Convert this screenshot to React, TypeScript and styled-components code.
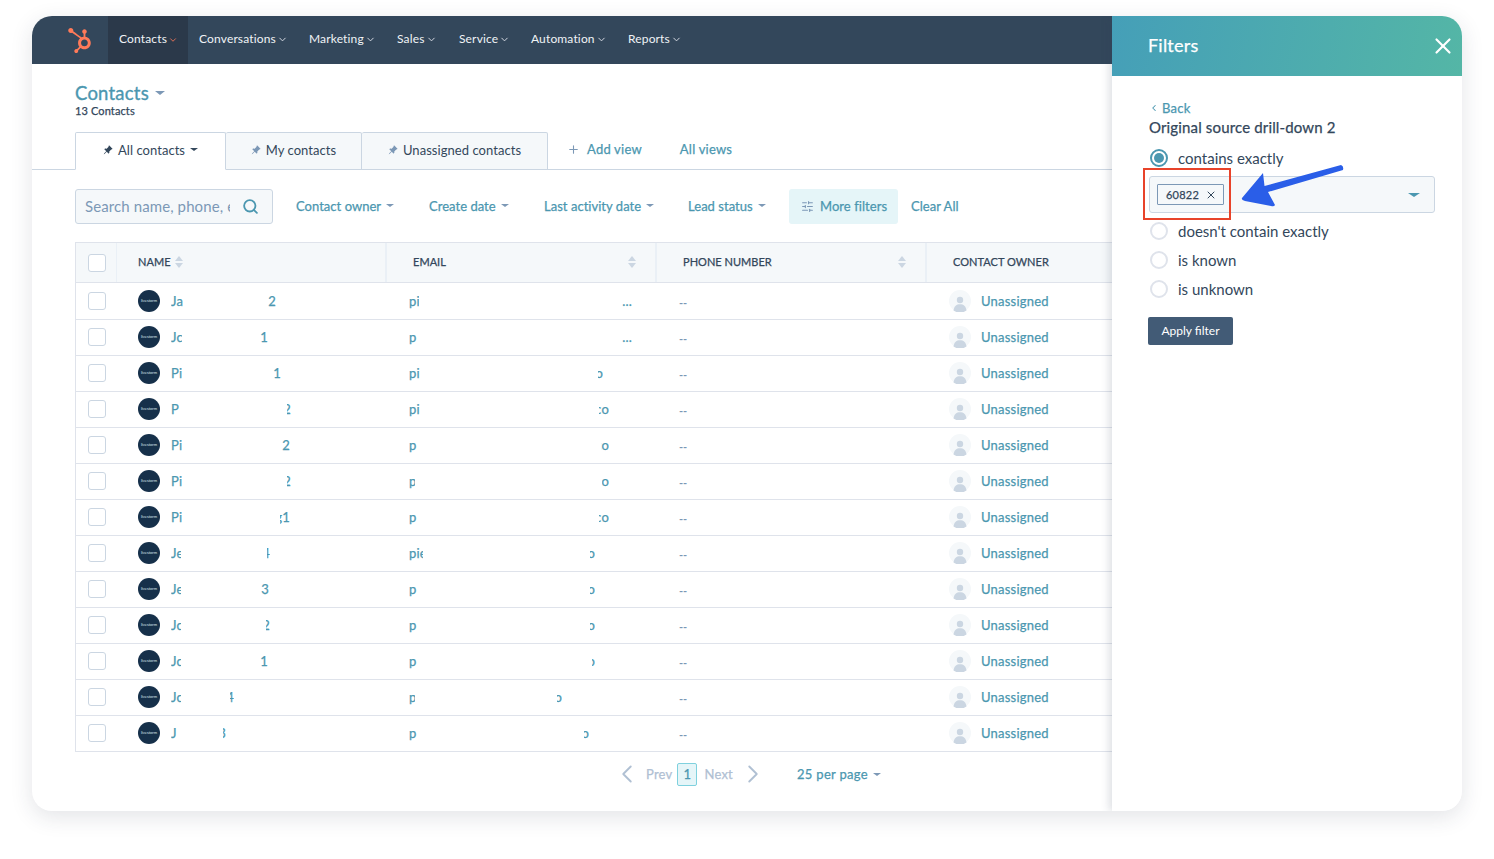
import React from 'react';
import styled, { createGlobalStyle, css } from 'styled-components';
import { ChevronDown, ChevronLeft, ChevronRight, Plus, Search, SlidersHorizontal, X } from 'lucide-react';
import { FaHubspot } from 'react-icons/fa';
import { BsPinAngleFill } from 'react-icons/bs';

const teal = '#4b97b0';
const ink = '#33475b';
const line = '#dfe3eb';

const medium = css`
  font-weight: 400; -webkit-text-stroke: .25px currentColor; letter-spacing: .22px;
`;

const Global = createGlobalStyle`
  html, body { margin: 0; padding: 0; background: #fff; }
  body { font-family: Lato, "Open Sans", sans-serif; color: ${ink}; }
  * { box-sizing: border-box; }
`;
const Page = styled.div`
  width: 1494px; height: 859px; padding: 16px 32px 48px; overflow: hidden;
`;
const Card = styled.div`
  display: flex; width: 1430px; height: 795px; border-radius: 20px; background: #fff; overflow: hidden;
  box-shadow: 0 6px 22px rgba(40, 50, 70, .13);
`;
const Main = styled.main`
  display: flex; flex-direction: column; width: 1080px; flex: none; overflow: hidden;
`;
const Nav = styled.nav`
  display: flex; align-items: stretch; height: 48px; flex: none; background: #33475b;
`;
const LogoBox = styled.div`
  display: flex; align-items: center; justify-content: center; width: 76px; color: #ff7a59; padding-left: 19px; flex: none;
`;
const NavItem = styled.div<{ $active?: boolean; $w: number }>`
  display: flex; align-items: center; gap: 1px; width: ${p => p.$w}px; padding: 0 0 3px 11px; flex: none;
  color: #f0f3f6; font-size: 12px; letter-spacing: .15px;
  background: ${p => (p.$active ? '#2b394a' : 'transparent')};
  svg { color: ${p => (p.$active ? '#ff7a59' : '#dfe3eb')}; margin-top: 2px; }
`;
const Heading = styled.header`
  padding: 18px 0 0 43px; height: 68px; flex: none;
`;
const TitleRow = styled.div`
  ${medium}; display: flex; align-items: center; gap: 6px; height: 22px; color: ${teal}; font-size: 18.5px;
  -webkit-text-stroke: .35px currentColor;
`;
const Caret = styled.span<{ $s?: number; $c?: string }>`
  display: inline-block; width: 0; height: 0; flex: none;
  border-left: ${p => p.$s ?? 4}px solid transparent; border-right: ${p => p.$s ?? 4}px solid transparent;
  border-top: ${p => Math.ceil((p.$s ?? 4) * 0.62)}px solid ${p => p.$c ?? '#7c98b6'};
`;
const Count = styled.div`
  ${medium}; font-size: 11px; margin-top: 0; line-height: 14px; letter-spacing: .12px;
`;
const Tabs = styled.div`
  display: flex; align-items: stretch; height: 38px; flex: none; padding-left: 43px; border-bottom: 1px solid #cbd6e2;
`;
const Tab = styled.div<{ $active?: boolean; $w: number }>`
  display: flex; align-items: center; justify-content: center; gap: 5px; width: ${p => p.$w}px; height: 38px; flex: none;
  padding-bottom: 3px; font-size: 13px; letter-spacing: .05px; color: ${ink}; background: ${p => (p.$active ? '#fff' : '#f5f8fa')};
  border: 1px solid #cbd6e2; border-left-width: ${p => (p.$active ? 1 : 0)}px;
  border-bottom-color: ${p => (p.$active ? '#fff' : '#cbd6e2')};
  border-radius: 2px 2px 0 0;
  svg { color: ${p => (p.$active ? ink : '#7c98b6')}; }
`;
const TabLink = styled.div<{ $ml: number }>`
  ${medium}; display: flex; align-items: center; gap: 7px; margin-left: ${p => p.$ml}px; height: 34px; color: ${teal};
  font-size: 13px; svg { color: #7c98b6; }
`;
const Filters = styled.div`
  display: flex; align-items: center; height: 35px; margin: 19px 0 18px 43px;
`;
const SearchBox = styled.div`
  display: flex; align-items: center; justify-content: space-between; width: 198px; height: 35px; padding: 0 13px 2px 9px;
  flex: none; background: #f5f8fa; border: 1px solid #cbd6e2; border-radius: 3px; color: #7c98b6; font-size: 15px; letter-spacing: .1px;
  svg { color: ${teal}; flex: none; margin-top: 2px; }
`;
const SearchHint = styled.span`
  width: 145px; overflow: hidden; white-space: nowrap;
`;
const FilterItem = styled.div<{ $w: number }>`
  ${medium}; letter-spacing: .03px; display: flex; align-items: center; gap: 5px; width: ${p => p.$w}px; padding-bottom: 2px; color: ${teal}; font-size: 13px; flex: none; white-space: nowrap;
`;
const MoreFilters = styled.div`
  ${medium}; letter-spacing: .05px; display: flex; align-items: center; gap: 6px; width: 109px; height: 35px; padding: 0 0 2px 12px; flex: none;
  background: #e5f5f8; border-radius: 3px; color: ${teal}; font-size: 13px; white-space: nowrap;
  svg { color: #7c98b6; margin-top: 2px; }
`;
const Table = styled.div`
  margin-left: 43px; border-left: 1px solid ${line}; border-top: 1px solid ${line};
`;
const Row = styled.div<{ $head?: boolean; $first?: boolean }>`
  display: grid; grid-template-columns: 41px 270px 270px 270px 1fr; align-items: center;
  height: ${p => (p.$head ? 40 : p.$first ? 37 : 36)}px; padding-bottom: ${p => (p.$head || p.$first ? 0 : 1)}px;
  background: ${p => (p.$head ? '#f5f8fa' : '#fff')}; border-bottom: 1px solid ${line};
`;
const HeadCell = styled.div<{ $pad: number; $sortRight?: boolean; $last?: boolean }>`
  ${medium}; letter-spacing: .03px; display: flex; align-items: center; height: 100%; padding: 0 19px 2px ${p => p.$pad}px;
  justify-content: ${p => (p.$sortRight ? 'space-between' : 'flex-start')}; gap: 4px;
  border-right: ${p => (p.$last ? 0 : 2)}px solid #eaf0f6; font-size: 11px; color: ${ink}; white-space: nowrap;
`;
const CheckCell = styled.div<{ $head?: boolean }>`
  display: flex; align-items: center; justify-content: center; height: 100%; padding-left: ${p => (p.$head ? 1 : 0)}px;
  border-right: ${p => (p.$head ? 1 : 0)}px solid #eaf0f6;
`;
const Check = styled.span`
  display: block; width: 18px; height: 18px; background: #fff; border: 1px solid #cbd6e2; border-radius: 3px;
`;
const Sort = styled.span`
  display: flex; flex-direction: column; gap: 2px; flex: none;
`;
const SortUp = styled.span`
  width: 0; height: 0; border-left: 4px solid transparent; border-right: 4px solid transparent; border-bottom: 5px solid #cbd6e2;
`;
const SortDown = styled(SortUp)`
  border-bottom: 0; border-top: 5px solid #cbd6e2;
`;
const NameCell = styled.div`
  display: flex; align-items: center; padding-left: 21px; height: 100%;
`;
const Logo = styled.span`
  display: flex; align-items: center; justify-content: center; width: 22px; height: 22px; border-radius: 50%;
  background: #16304a; flex: none; overflow: hidden;
`;
const LogoText = styled.span`
  font-size: 4px; line-height: 4px; color: #dbe4ec; white-space: nowrap;
`;
const Frag = styled.span<{ $w: number; $ml?: number; $end?: boolean }>`
  ${medium}; display: flex; justify-content: ${p => (p.$end ? 'flex-end' : 'flex-start')}; width: ${p => p.$w}px; margin-left: ${p => p.$ml ?? 0}px;
  flex: none; overflow: hidden; color: ${teal}; font-size: 13px; white-space: nowrap;
`;
const EmailCell = styled.div`
  display: flex; align-items: center; padding-left: 22px; height: 100%;
`;
const Dash = styled.div`
  padding: 2px 0 0 22px; color: #7c98b6; font-size: 11px; font-weight: 700;
`;
const OwnerCell = styled.div`
  display: flex; align-items: center; gap: 10px; padding-left: 22px; height: 100%;
`;
const OwnerLink = styled.span`
  ${medium}; color: ${teal}; font-size: 13px;
`;
const Pager = styled.div`
  ${medium}; display: flex; align-items: center; height: 24px; margin: 10px 0 0 580px; flex: none; color: #b0c0d3; font-size: 13px;
`;
const PagerArrow = styled.span<{ $ml: number }>`
  display: flex; width: 30px; justify-content: center; margin-left: ${p => p.$ml}px; flex: none;
  -webkit-text-stroke: 0;
`;
const PagerLabel = styled.span`
  margin-left: 4px;
`;
const PageNum = styled.span`
  display: flex; align-items: center; justify-content: center; width: 20px; height: 23px; margin: 0 7px 0 5px;
  background: #e5f5f8; border: 1px solid #7fd1de; border-radius: 2px; color: ${teal};
`;
const PerPage = styled.div`
  display: flex; align-items: center; gap: 5px; margin-left: 29px; color: ${teal}; letter-spacing: .3px;
`;
const Panel = styled.aside`
  position: relative; width: 350px; flex: none; background: #fff; z-index: 1;
  box-shadow: -3px 0 8px rgba(50, 65, 90, .16);
`;
const PanelHead = styled.div`
  ${medium}; display: flex; align-items: center; justify-content: space-between; height: 60px; padding: 0 6px 2px 36px;
  background: linear-gradient(100deg, #459fb8, #54b6a6); color: #fff; font-size: 18px;
  svg { margin-top: 2px; }
`;
const PanelBody = styled.div`
  padding: 23px 27px 0 37px;
`;
const Back = styled.div`
  ${medium}; display: flex; align-items: center; gap: 3px; height: 17px; color: ${teal}; font-size: 13px;
`;
const FilterName = styled.div`
  ${medium}; letter-spacing: .15px; margin: 1px 0 0 0; font-size: 15px; line-height: 20px; color: ${ink};
`;
const RadioRow = styled.div<{ $mt: number }>`
  display: flex; align-items: center; gap: 10px; height: 20px; margin-top: ${p => p.$mt}px; padding-left: 1px;
  font-size: 15px; letter-spacing: 0; color: ${ink};
`;
const Radio = styled.span<{ $on?: boolean }>`
  display: flex; align-items: center; justify-content: center; width: 18px; height: 18px; border-radius: 50%;
  border: ${p => (p.$on ? `2px solid ${teal}` : '2px solid #dfe3eb')}; background: #fff; flex: none;
`;
const Dot = styled.span`
  width: 10px; height: 10px; border-radius: 50%; background: ${teal};
`;
const Select = styled.div`
  display: flex; align-items: center; justify-content: space-between; height: 37px; margin: 8px 0 0 0; padding: 0 14px 0 7px;
  background: #f5f8fa; border: 1px solid #cbd6e2; border-radius: 3px;
`;
const Chip = styled.span`
  ${medium}; display: flex; align-items: center; gap: 6px; height: 21px; padding: 0 6px 0 8px; background: #f5f8fa; border: 1px solid #7c98b6;
  border-radius: 1px; font-size: 11px; color: ${ink};
`;
const ApplyButton = styled.button`
  display: block; width: 85px; height: 28px; margin: 18px 0 0 -1px; padding: 0 0 2px; border: 0; border-radius: 2px;
  background: #425b76; color: #fff; font: 400 12px Lato, sans-serif;
`;
const Highlight = styled.div`
  position: absolute; left: 31px; top: 152px; width: 88px; height: 52px; border: 2px solid #e8432a; pointer-events: none;
`;
const ArrowMark = styled.svg`
  position: absolute; left: 125px; top: 145px; width: 110px; height: 55px; overflow: visible; pointer-events: none;
`;

type Data = {
  head: string; headW: number; tail: string; tailW: number; tailEnd: number;
  mail: string; mailW: number; rest: string; restW: number; restEnd: number;
};
const d = (head: string, headW: number, tail: string, tailW: number, tailEnd: number, mail: string, mailW: number, rest: string, restW: number, restEnd: number): Data =>
  ({ head, headW, tail, tailW, tailEnd, mail, mailW, rest, restW, restEnd });

const rows: Data[] = [
  d('Ja', 12, '2', 8, 276, 'pi', 10, '...', 13, 632),
  d('Jc', 11, '1', 8, 268, 'p', 8, '...', 13, 632),
  d('Pi', 12, '1', 8, 281, 'pi', 11, 'o', 5, 603),
  d('P', 12, '2', 4, 291, 'pi', 11, 'co', 10, 609),
  d('Pi', 12, '2', 8, 290, 'p', 8, 'co', 8, 609),
  d('Pi', 12, '2', 4, 291, 'p', 6, 'o', 7, 609),
  d('Pi', 11, 'g1', 10, 290, 'p', 8, 'co', 10, 609),
  d('Je', 10, '4', 3, 270, 'pie', 14, 'o', 5, 595),
  d('Je', 10, '3', 8, 269, 'p', 8, 'o', 5, 595),
  d('Jc', 10, '2', 4, 270, 'p', 8, 'o', 5, 595),
  d('Jc', 10, '1', 8, 268, 'p', 8, 'o', 3, 595),
  d('Jc', 10, '4', 4, 234, 'p', 6, 'o', 5, 562),
  d('J', 8, '3', 3, 226, 'p', 8, 'o', 5, 589),
];

const GhostAvatar = () => (
  <svg width="22" height="22" viewBox="0 0 22 22">
    <circle cx="11" cy="11" r="11" fill="#f5f8fa" />
    <circle cx="11" cy="10" r="3.2" fill="#cbd6e2" />
    <path d="M4.5 20.5c.6-4.4 3-6.3 6.5-6.3s5.900 1.900 6.500 6.300A11 11 0 0 1 4.500 20.500z" fill="#cbd6e2" />
  </svg>
);

const SortIcon = () => (
  <Sort>
    <SortUp />
    <SortDown />
  </Sort>
);

const navItems: [string, number][] = [
  ['Conversations', 110], ['Marketing', 88], ['Sales', 62], ['Service', 72], ['Automation', 97], ['Reports', 90],
];

export default function App() {
  return (
    <Page>
      <Global />
      <Card>
        <Main>
          <Nav>
            <LogoBox><FaHubspot size={25} /></LogoBox>
            <NavItem $active $w={80}>Contacts<ChevronDown size={10} /></NavItem>
            {navItems.map(([t, w]) => (
              <NavItem key={t} $w={w}>{t}<ChevronDown size={11} /></NavItem>
            ))}
          </Nav>
          <Heading>
            <TitleRow>Contacts<Caret $s={5} /></TitleRow>
            <Count>13 Contacts</Count>
          </Heading>
          <Tabs>
            <Tab $active $w={151}><BsPinAngleFill size={10} />All contacts<Caret $s={4} $c={ink} /></Tab>
            <Tab $w={136}><BsPinAngleFill size={10} />My contacts</Tab>
            <Tab $w={186}><BsPinAngleFill size={10} />Unassigned contacts</Tab>
            <TabLink $ml={19}><Plus size={13} />Add view</TabLink>
            <TabLink $ml={38}>All views</TabLink>
          </Tabs>
          <Filters>
            <SearchBox><SearchHint>Search name, phone, e</SearchHint><Search size={17} strokeWidth={2.6} /></SearchBox>
            <FilterItem $w={23} />
            <FilterItem $w={133}>Contact owner<Caret /></FilterItem>
            <FilterItem $w={115}>Create date<Caret /></FilterItem>
            <FilterItem $w={144}>Last activity date<Caret /></FilterItem>
            <FilterItem $w={101}>Lead status<Caret /></FilterItem>
            <MoreFilters><SlidersHorizontal size={13} />More filters</MoreFilters>
            <FilterItem $w={13} />
            <FilterItem $w={60}>Clear All</FilterItem>
          </Filters>
          <Table>
            <Row $head>
              <CheckCell $head><Check /></CheckCell>
              <HeadCell $pad={21}>NAME<SortIcon /></HeadCell>
              <HeadCell $pad={26} $sortRight>EMAIL<SortIcon /></HeadCell>
              <HeadCell $pad={26} $sortRight>PHONE NUMBER<SortIcon /></HeadCell>
              <HeadCell $pad={26} $last>CONTACT OWNER</HeadCell>
            </Row>
            {rows.map((r, i) => (
              <Row key={i} $first={i === 0}>
                <CheckCell><Check /></CheckCell>
                <NameCell>
                  <Logo><LogoText>livestorm</LogoText></Logo>
                  <Frag $w={r.headW} $ml={11}>{r.head}</Frag>
                  <Frag $w={r.tailW} $ml={r.tailEnd - 171 - r.headW - r.tailW} $end>{r.tail}</Frag>
                </NameCell>
                <EmailCell>
                  <Frag $w={r.mailW}>{r.mail}</Frag>
                  <Frag $w={r.restW} $ml={r.restEnd - 409 - r.mailW - r.restW} $end>{r.rest}</Frag>
                </EmailCell>
                <Dash>--</Dash>
                <OwnerCell><GhostAvatar /><OwnerLink>Unassigned</OwnerLink></OwnerCell>
              </Row>
            ))}
          </Table>
          <Pager>
            <PagerArrow $ml={0}><ChevronLeft size={30} strokeWidth={1.5} /></PagerArrow>
            <PagerLabel>Prev</PagerLabel>
            <PageNum>1</PageNum>
            <span>Next</span>
            <PagerArrow $ml={5}><ChevronRight size={30} strokeWidth={1.5} /></PagerArrow>
            <PerPage>25 per page<Caret /></PerPage>
          </Pager>
        </Main>
        <Panel>
          <PanelHead>Filters<X size={26} strokeWidth={2} /></PanelHead>
          <PanelBody>
            <Back><ChevronLeft size={10} strokeWidth={2.5} />Back</Back>
            <FilterName>Original source drill-down 2</FilterName>
            <RadioRow $mt={11}><Radio $on><Dot /></Radio>contains exactly</RadioRow>
            <Select>
              <Chip>60822<X size={12} /></Chip>
              <Caret $s={6} $c={teal} />
            </Select>
            <RadioRow $mt={8}><Radio />doesn't contain exactly</RadioRow>
            <RadioRow $mt={9}><Radio />is known</RadioRow>
            <RadioRow $mt={9}><Radio />is unknown</RadioRow>
            <ApplyButton>Apply filter</ApplyButton>
          </PanelBody>
          <Highlight />
          <ArrowMark viewBox="0 0 110 55">
            <path d="M5 37 L26 12 L27.500 25 L104 4 Q107 5 106 9 L31 31 L38 44 Q37 46 34 45 L8 40 Q4 39 5 37 Z" fill="#2a5ee8" />
          </ArrowMark>
        </Panel>
      </Card>
    </Page>
  );
}
